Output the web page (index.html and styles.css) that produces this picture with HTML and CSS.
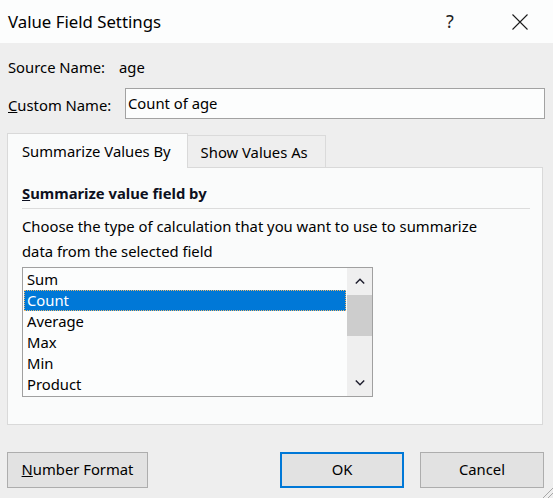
FILE: index.html
```html
<!DOCTYPE html>
<html>
<head>
<meta charset="utf-8">
<link rel="stylesheet" href="styles.css">
</head>
<body>
<div class="dialog">
  <header class="titlebar">
    <span class="title">Value Field Settings</span>
    <span class="help">?</span>
    <span class="close">
      <svg width="16" height="16" viewBox="0 0 16 16"><path d="M0.5 0.5 L15.5 15.5 M15.5 0.5 L0.5 15.5" stroke="#1b1b1b" stroke-width="1.1" fill="none"/></svg>
    </span>
  </header>
  <main class="content">
    <div class="row source">
      <span class="label label-source">Source Name:</span>
      <span class="value">age</span>
    </div>
    <div class="row custom">
      <span class="label label-custom"><u>C</u>ustom Name:</span>
      <div class="input">Count of age</div>
    </div>
    <div class="tabs">
      <div class="tab active">Summarize Values By</div>
      <div class="tab inactive">Show Values As</div>
    </div>
    <section class="panel">
      <h2 class="heading"><u>S</u>ummarize value field by</h2>
      <p class="desc">Choose the type of calculation that you want to use to summarize<br>data from the selected field</p>
      <div class="listbox">
        <ul class="items">
          <li class="item">Sum</li>
          <li class="item selected">Count</li>
          <li class="item">Average</li>
          <li class="item">Max</li>
          <li class="item">Min</li>
          <li class="item">Product</li>
        </ul>
        <div class="scrollbar">
          <div class="arrow">
            <svg width="10" height="6" viewBox="0 0 10 6"><path d="M0.8 5.5 L5 1.2 L9.2 5.5" stroke="#1c1c2c" stroke-width="1.4" fill="none"/></svg>
          </div>
          <div class="thumb"></div>
          <div class="track"></div>
          <div class="arrow">
            <svg width="10" height="6" viewBox="0 0 10 6"><path d="M0.8 0.5 L5 4.8 L9.2 0.5" stroke="#1c1c2c" stroke-width="1.4" fill="none"/></svg>
          </div>
        </div>
      </div>
    </section>
    <div class="buttons">
      <button class="btn btn-format"><u>N</u>umber Format</button>
      <span class="spacer"></span>
      <button class="btn btn-ok">OK</button>
      <button class="btn btn-cancel">Cancel</button>
    </div>
  </main>
  <svg class="grip" width="12" height="12" viewBox="0 0 12 12"><path d="M12 2 L2 12 M12 7 L7 12" stroke="#a8a8a8" stroke-width="1" fill="none"/></svg>
</div>
</body>
</html>
```

FILE: styles.css
```css
* { box-sizing: border-box; }
html, body { margin: 0; padding: 0; }
body {
  width: 553px;
  height: 498px;
  overflow: hidden;
  background: #eeeeee;
  font-family: "Noto Sans", "Open Sans", sans-serif;
  font-size: 14.8px;
  color: #000;
}
.dialog {
  position: relative;
  width: 553px;
  height: 498px;
  background: #eeeeee;
}
.titlebar {
  height: 43px;
  background: #fcfdfd;
  display: flex;
  align-items: center;
}
.title {
  flex: 1;
  padding-left: 8px;
  font-size: 16.8px;
  padding-bottom: 1px;
}
.help {
  width: 46px;
  margin-right: 24px;
  text-align: center;
  font-size: 18px;
  color: #222;
  padding-bottom: 1px;
}
.close {
  width: 46px;
  margin-right: 10px;
  display: flex;
  justify-content: center;
  align-items: center;
}
.content {
  padding: 0 9px 0 7px;
}
.row {
  display: flex;
  align-items: center;
  line-height: 20px;
}
.source { margin-top: 14px; }
.label { margin-left: 1px; flex: none; }
.label-source { width: 111px; }
.label-custom { width: 117px; padding-top: 2px; }
.custom { margin-top: 11px; }
.input {
  flex: 1;
  height: 31px;
  margin-right: -1px;
  border: 1px solid #a2a2a2;
  background: #fcfdfd;
  padding-left: 2px;
  line-height: 28px;
}
.tabs {
  display: flex;
  align-items: flex-end;
  margin-top: 14px;
  margin-right: 1px;
}
.tab {
  line-height: 20px;
  white-space: nowrap;
}
.tab.active {
  height: 35px;
  margin-bottom: -1px;
  padding: 7px 16px 0 14px;
  background: #fafbfb;
  border: 1px solid #d9d9d9;
  border-bottom: none;
  position: relative;
  z-index: 1;
}
.tab.inactive {
  height: 32px;
  padding: 6px 17px 0 13px;
  background: #eeeeee;
  border: 1px solid #dadada;
  border-left: none;
  border-bottom: none;
}
.panel {
  margin-right: 1px;
  background: #fafbfb;
  border: 1px solid #d9d9d9;
  padding: 15px 12px 27px 14px;
}
.heading {
  margin: 0;
  font-size: 14.8px;
  font-weight: bold;
  line-height: 20px;
  color: #0d1020;
  padding-bottom: 5px;
  border-bottom: 1px solid #dcdcdc;
}
.desc {
  margin: 5px 0 0 0;
  line-height: 25px;
}
.listbox {
  margin-top: 3px;
  width: 351px;
  height: 130px;
  border: 1px solid #a0a0a0;
  background: #fcfdfd;
  display: flex;
}
.items {
  flex: 1;
  list-style: none;
  margin: 0;
  padding: 1px 1px 0 1px;
}
.item {
  height: 21px;
  line-height: 21px;
  padding-left: 3px;
}
.item.selected {
  background: #0078d7;
  color: #fff;
  outline: 1px dotted #e9b870;
  outline-offset: -1px;
}
.scrollbar {
  width: 25px;
  display: flex;
  flex-direction: column;
  background: #efefef;
}
.arrow {
  height: 26px;
  display: flex;
  align-items: center;
  justify-content: center;
}
.thumb {
  height: 41px;
  margin-top: 1px;
  background: #cdcdcd;
}
.track { flex: 1; }
.buttons {
  display: flex;
  margin-top: 27px;
  gap: 16px;
}
.spacer { flex: 1; }
.btn {
  height: 36px;
  font-family: inherit;
  font-size: 14.8px;
  color: #000;
  background: #e2e2e2;
  border: 1px solid #adadad;
  padding: 0 0 2px 0;
  margin: 0;
}
.btn-format { width: 141px; }
.btn-ok { width: 124px; border: 2px solid #0078d7; }
.btn-cancel { width: 124px; }
.grip {
  position: absolute;
  right: 0;
  bottom: 0;
}
```
